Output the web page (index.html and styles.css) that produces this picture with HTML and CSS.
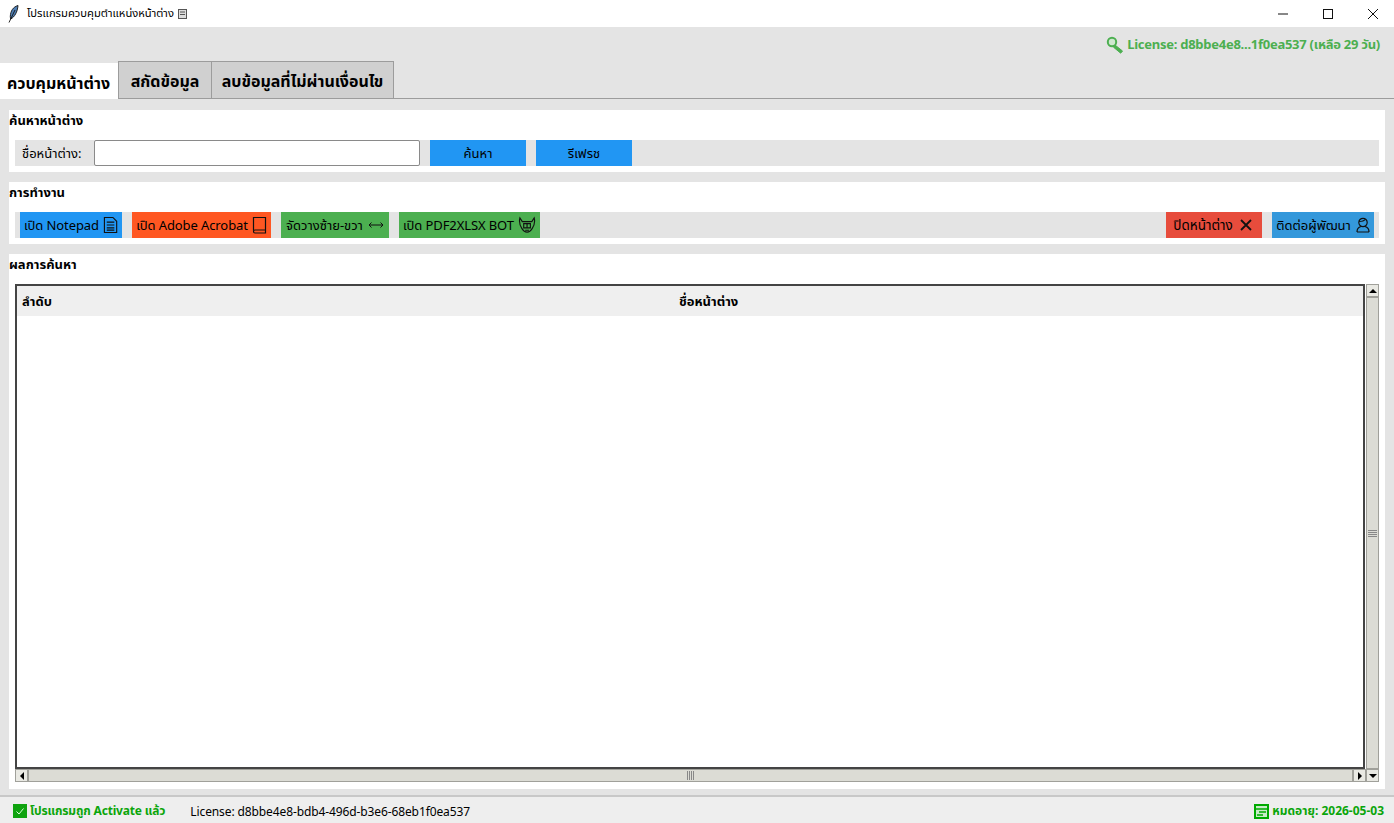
FILE: index.html
```html
<!DOCTYPE html>
<html lang="th">
<head>
<meta charset="utf-8">
<title>โปรแกรมควบคุมตำแหน่งหน้าต่าง</title>
<link rel="stylesheet" href="styles.css">
</head>
<body>
<div class="app">
  <header class="titlebar">
    <svg class="feather" width="11" height="18" viewBox="0 0 11 18"><path d="M10 .5C5 2 2.500 6 2.300 11.500c0 1 .2 2 .5 2.500C6.500 12 9.500 7 10 .5z" fill="#4f7fb5" stroke="#111" stroke-width=".9"/><path d="M1 17.500L7 5" stroke="#111" stroke-width=".9" fill="none"/></svg>
    <span class="title-text">โปรแกรมควบคุมตำแหน่งหน้าต่าง</span>
    <svg class="title-doc" width="9" height="10" viewBox="0 0 9 10"><rect x=".5" y=".5" width="8" height="9" fill="#ddd" stroke="#555"/><path d="M2 3h5M2 5.500h5" stroke="#555"/></svg>
    <div class="winctl">
      <svg width="14" height="14" viewBox="0 0 14 14"><path d="M2 7h10" stroke="#111" fill="none"/></svg>
      <svg width="14" height="14" viewBox="0 0 14 14"><rect x="2.500" y="2.500" width="9" height="9" stroke="#111" fill="none"/></svg>
      <svg width="14" height="14" viewBox="0 0 14 14"><path d="M2 2l10 10M12 2L2 12" stroke="#111" fill="none"/></svg>
    </div>
  </header>

  <div class="license-row">
    <svg width="18" height="18" viewBox="0 0 18 18"><circle cx="6" cy="6" r="4.200" fill="#cfe8d0" stroke="#4caf50" stroke-width="2"/><path d="M9 9l7.500 6-1.800 2.200-7.200-6z" fill="#4caf50" stroke="#4caf50"/></svg>
    <span class="license-text">License: d8bbe4e8...1f0ea537 (เหลือ 29 วัน)</span>
  </div>

  <nav class="tabs">
    <div class="tab active">ควบคุมหน้าต่าง</div>
    <div class="tab t2">สกัดข้อมูล</div>
    <div class="tab t3">ลบข้อมูลที่ไม่ผ่านเงื่อนไข</div>
  </nav>

  <main class="content">
    <section class="card">
      <h2>ค้นหาหน้าต่าง</h2>
      <div class="row search-row">
        <label>ชื่อหน้าต่าง:</label>
        <input type="text" class="search-input">
        <button class="btn wide blue">ค้นหา</button>
        <button class="btn wide blue">รีเฟรช</button>
      </div>
    </section>

    <section class="card">
      <h2>การทำงาน</h2>
      <div class="row action-row">
        <button class="btn blue a1"><span class="lbl">เปิด Notepad</span>
          <svg width="16" height="18" viewBox="0 0 16 18"><path d="M1.500 1h9l4 4v12h-13z M4 6h8M4 9h8M4 12h8M4 14.500h8" fill="none" stroke="#111" stroke-width="1.200"/></svg>
        </button>
        <button class="btn orange a2"><span class="lbl">เปิด Adobe Acrobat</span>
          <svg width="15" height="18" viewBox="0 0 15 18"><path d="M1.500 14.500V1.500h12v12.500H3a1.500 1.500 0 0 0 0 3h10.500V14" fill="none" stroke="#111" stroke-width="1.200"/></svg>
        </button>
        <button class="btn green a3"><span>จัดวางซ้าย-ขวา</span>
          <svg width="16" height="8" viewBox="0 0 16 8"><path d="M1 4h14M3.500 1.500L1 4l2.500 2.500M12.500 1.500L15 4l-2.500 2.500" fill="none" stroke="#111"/></svg>
        </button>
        <button class="btn green a4"><span class="lbl">เปิด PDF2XLSX BOT</span>
          <svg width="19" height="18" viewBox="0 0 19 18"><path d="M2 1.500c-1 4 0 8 2 11 1.500 2.500 3.500 4 5.500 4s4-1.500 5.500-4c2-3 3-7 2-11l-2.500 4h-10z" fill="none" stroke="#111" stroke-width="1.200"/><path d="M6 7.500h7v4.500H6z" fill="none" stroke="#111" stroke-width="1.200"/><path d="M9.500 7.500V12M7.500 14.500h4" stroke="#111" stroke-width="1.200"/></svg>
        </button>
        <span class="spacer"></span>
        <button class="btn red a5"><span>ปิดหน้าต่าง</span>
          <svg width="14" height="14" viewBox="0 0 14 14"><path d="M2 2l10 10M12 2L2 12" stroke="#111" stroke-width="1.800" fill="none"/></svg>
        </button>
        <button class="btn steel a6"><span>ติดต่อผู้พัฒนา</span>
          <svg width="14" height="16" viewBox="0 0 14 16"><circle cx="7" cy="5.500" r="4.200" fill="none" stroke="#111" stroke-width="1.200"/><path d="M3 4.500c2 0 5-.5 6-2M1 15c0-3 2-5 4-5.500M13 15c0-3-2-5-4-5.500M1 15h12" fill="none" stroke="#111" stroke-width="1.200"/></svg>
        </button>
      </div>
    </section>

    <section class="card results">
      <h2>ผลการค้นหา</h2>
      <div class="table-wrap">
        <div class="table-box">
          <div class="thead">
            <span class="col-a">ลำดับ</span>
            <span class="col-b">ชื่อหน้าต่าง</span>
          </div>
          <div class="tbody"></div>
        </div>
        <div class="vscroll">
          <span class="sb-btn"><i class="tri up"></i></span>
          <span class="sb-track"><span class="grip-v"><i></i><i></i><i></i><i></i></span></span>
          <span class="sb-btn"><i class="tri down"></i></span>
        </div>
        <div class="hscroll">
          <span class="sb-btn"><i class="tri left"></i></span>
          <span class="sb-track"><span class="grip-h"><i></i><i></i><i></i><i></i></span></span>
          <span class="sb-btn"><i class="tri right"></i></span>
        </div>
      </div>
    </section>
  </main>

  <footer class="statusbar">
    <span class="check"><svg width="14" height="14" viewBox="0 0 14 14"><rect width="14" height="14" fill="#0fa30f"/><path d="M3.500 7.500l2.500 2.500 4.500-5.500" stroke="#d8ffd8" fill="none"/></svg></span>
    <span class="st-active">โปรแกรมถูก Activate แล้ว</span>
    <span class="st-license">License: d8bbe4e8-bdb4-496d-b3e6-68eb1f0ea537</span>
    <span class="spacer"></span>
    <svg width="15" height="15" viewBox="0 0 15 15"><rect x="1" y="1" width="13" height="13" fill="#c8ecc8" stroke="#0a0" stroke-width="2"/><path d="M2 5h11M5 8h7M3 11h6" stroke="#0a0" stroke-width="1.500"/></svg>
    <span class="st-exp">หมดอายุ: 2026-05-03</span>
  </footer>
</div>
</body>
</html>
```

FILE: styles.css
```css
* { box-sizing: border-box; }
html, body { margin: 0; height: 100%; }
body { font-family: "Noto Sans", "Noto Sans Thai", "Noto Sans CJK SC", sans-serif; color: #000; background: #e4e4e4; overflow: hidden; }
.app { width: 1394px; height: 823px; display: flex; flex-direction: column; }

.titlebar { height: 27px; background: #fff; display: flex; align-items: center; padding-left: 8px; flex: none; }
.title-text { font-size: 11.2px; margin-left: 8px; }
.title-doc { margin-left: 4px; }
.winctl { margin-left: auto; display: flex; gap: 31px; padding-right: 14px; }

.license-row { height: 35px; flex: none; display: flex; justify-content: flex-end; align-items: center; gap: 3px; padding: 1px 14px 0 0; color: #4caf50; font-size: 13px; font-weight: 700; }
.license-text { letter-spacing: -.26px; }

.tabs { height: 37px; flex: none; display: flex; align-items: flex-end; border-bottom: 1px solid #9c9c9c; }
.tab { height: 37px; background: #d0d0d0; border: 1px solid #9c9c9c; border-bottom: 0; display: flex; align-items: center; justify-content: center; font-size: 16px; font-weight: 700; margin-left: -1px; padding-top: 4px; }
.tab.active { background: #fff; width: 118px; height: 36px; margin: 0 0 -1px 0; border: 0; padding: 6px 1px 0 0; }
.t2 { width: 94px; margin-left: 0; }
.t3 { width: 183px; }

.content { flex: 1; display: flex; flex-direction: column; gap: 10px; padding: 11px 9px 6px; min-height: 0; }
.card { background: #fff; height: 62px; padding: 0 6px; flex: none; }
.card h2 { margin: 0 0 0 -6px; height: 30px; line-height: 20px; font-size: 13px; font-weight: 700; }
.row { height: 26px; background: #e4e4e4; display: flex; align-items: center; }
.search-row label { font-size: 13px; width: 79px; padding: 2px 0 0 7px; white-space: nowrap; }
.search-input { width: 326px; height: 26px; border: 1px solid #8a8a8a; border-radius: 2px; background: #fff; outline: none; padding: 0; }
.btn { height: 26px; border: 0; padding: 0 4px; font: inherit; font-size: 13px; color: #000; display: flex; align-items: center; justify-content: center; gap: 4px; white-space: nowrap; }
.btn span { padding-top: 2px; }
.wide { width: 96px; padding-top: 2px; }
.search-row .wide { margin-left: 10px; }
.blue { background: #2196f3; }
.orange { background: #ff5722; }
.green { background: #4caf50; }
.red { background: #e74c3c; }
.steel { background: #3498db; }
.action-row { padding: 0 5px; gap: 10px; }
.lbl { letter-spacing: -.1px; }
.a1 { width: 102px; }
.a2 { width: 139px; }
.a3 { width: 108px; gap: 5px; }
.a4 { width: 141px; }
.a5 { width: 96px; font-size: 13.500px; gap: 6px; padding-right: 6px; }
.a6 { width: 102px; gap: 5px; }
.spacer { flex: 1; }

.results { flex: 1; height: auto; display: flex; flex-direction: column; }
.table-wrap { flex: 1; display: grid; grid-template-columns: 1fr 13px; grid-template-rows: 1fr 13px; margin-bottom: 7px; }
.table-box { border: 2px solid #444; display: flex; flex-direction: column; margin-right: 1px; }
.thead { height: 30px; background: #efefef; display: flex; align-items: center; font-size: 13px; font-weight: 700; flex: none; padding-top: 1px; }
.col-a { width: 662px; padding-left: 5px; }
.tbody { flex: 1; background: #fff; }
.vscroll { grid-row: 1 / span 2; grid-column: 2; background: #d8d8d0; display: flex; flex-direction: column; }
.hscroll { grid-row: 2; grid-column: 1; background: #d8d8d0; display: flex; }
.sb-btn { width: 13px; height: 13px; flex: none; background: #e9e9e3; display: flex; align-items: center; justify-content: center; border: 1px solid #a0a09a; }
.sb-track { flex: 1; display: flex; align-items: center; justify-content: center; background: #dcdcd5; border: 1px solid #a0a09a; }
.grip-v { display: flex; flex-direction: column; gap: 1px; width: 9px; }
.grip-v i { height: 1px; background: #888; }
.grip-h { display: flex; gap: 1px; height: 9px; }
.grip-h i { width: 1px; background: #888; }
.tri { width: 0; height: 0; border: 4px solid transparent; display: block; }
.tri.up { border-bottom: 4px solid #000; border-top: 0; }
.tri.down { border-top: 4px solid #000; border-bottom: 0; }
.tri.left { border-right: 4px solid #000; border-left: 0; }
.tri.right { border-left: 4px solid #000; border-right: 0; }

.statusbar { height: 28px; flex: none; display: flex; align-items: center; background: #eee; border-top: 2px solid #c8c8c8; padding: 2px 10px 0 13px; font-size: 12px; }
.check { display: flex; margin-right: 3px; }
.st-active { color: #0aa50a; font-weight: 700; letter-spacing: -.17px; }
.st-license { margin-left: 25px; letter-spacing: -.11px; }
.st-exp { color: #0aa50a; font-weight: 700; margin-left: 3px; }
```
